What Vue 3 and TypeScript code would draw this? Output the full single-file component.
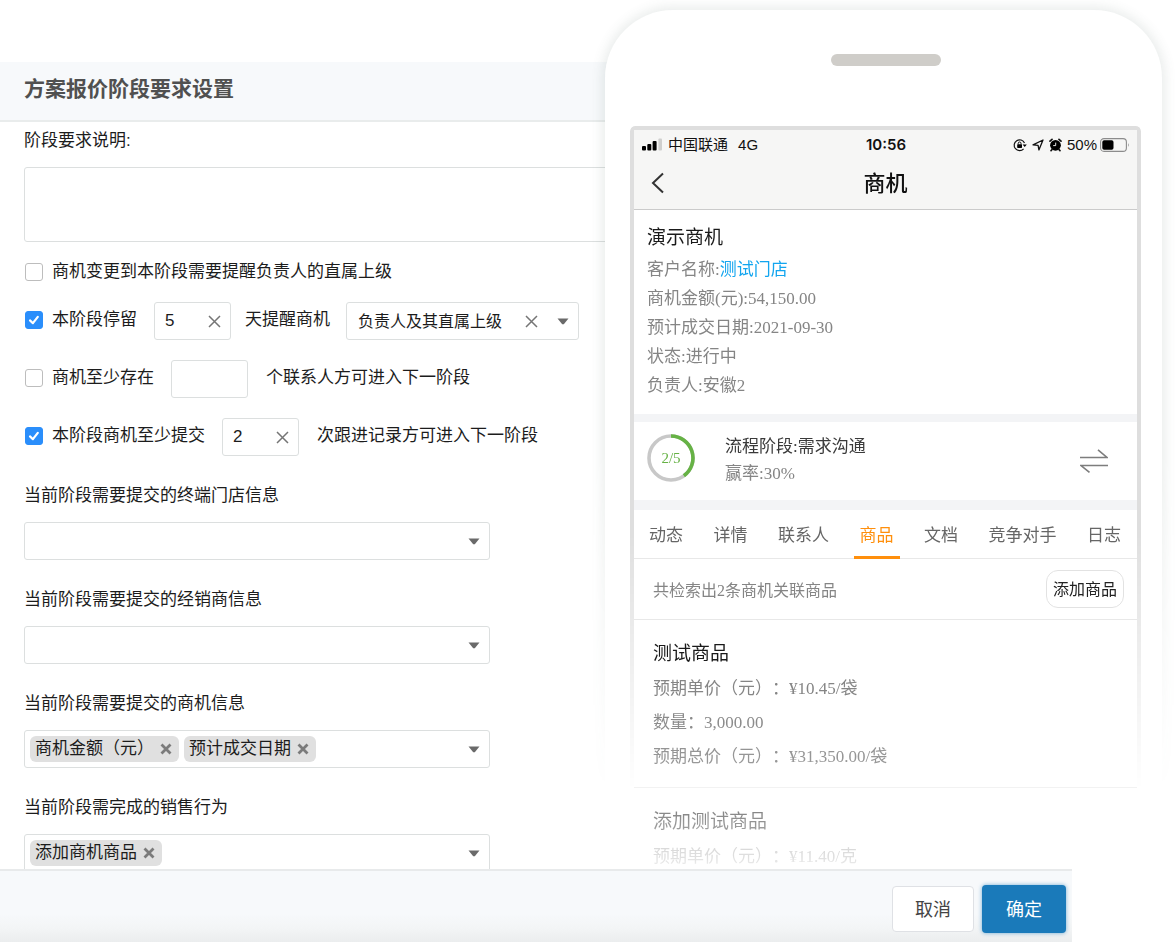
<script setup lang="ts">
import { ref } from 'vue'

interface TagField {
  id: string
  label: string
  tags: string[]
}

const description = ref('')
const notifyManager = ref(false)
const limitStay = ref(true)
const stayDays = ref('5')
const notifyTarget = ref('负责人及其直属上级')
const needContacts = ref(false)
const contactCount = ref('')
const needFollowUps = ref(true)
const followUpCount = ref('2')

const fields = ref<TagField[]>([
  { id: 'store', label: '当前阶段需要提交的终端门店信息', tags: [] },
  { id: 'dealer', label: '当前阶段需要提交的经销商信息', tags: [] },
  { id: 'chance', label: '当前阶段需要提交的商机信息', tags: ['商机金额（元）', '预计成交日期'] },
  { id: 'action', label: '当前阶段需完成的销售行为', tags: ['添加商机商品'] },
])

function removeTag(field: TagField, tag: string) {
  field.tags = field.tags.filter((t) => t !== tag)
}

const tabs = ['动态', '详情', '联系人', '商品', '文档', '竞争对手', '日志']
const activeTab = ref('商品')

const products = [
  { name: '测试商品', rows: ['预期单价（元）：¥10.45/袋', '数量：3,000.00', '预期总价（元）：¥31,350.00/袋'] },
  { name: '添加测试商品', rows: ['预期单价（元）：¥11.40/克'] },
]
</script>

<template>
  <div class="page">
    <section class="dialog" aria-labelledby="dialog-title">
      <header class="dialog-head">
        <h1 id="dialog-title">方案报价阶段要求设置</h1>
      </header>

      <form class="dialog-body" @submit.prevent>
        <label class="field-label" for="desc">阶段要求说明:</label>
        <textarea id="desc" v-model="description" class="desc"></textarea>

        <div class="single-row">
          <label class="check"><input v-model="notifyManager" type="checkbox" />商机变更到本阶段需要提醒负责人的直属上级</label>
        </div>

        <div class="rows">
          <div class="row">
            <label class="check"><input v-model="limitStay" type="checkbox" />本阶段停留</label>
            <span class="num near">
              <input v-model="stayDays" type="text" aria-label="停留天数" />
              <button type="button" class="clear" aria-label="清空" @click="stayDays = ''">
                <svg width="13" height="13" viewBox="0 0 13 13"><path d="M1 1 12 12M12 1 1 12" /></svg>
              </button>
            </span>
            <span class="row-text">天提醒商机</span>
            <span class="picker">
              <select v-model="notifyTarget" aria-label="提醒对象">
                <option value=""></option>
                <option>负责人及其直属上级</option>
              </select>
              <button type="button" class="clear" aria-label="清空" @click="notifyTarget = ''">
                <svg width="13" height="13" viewBox="0 0 13 13"><path d="M1 1 12 12M12 1 1 12" /></svg>
              </button>
              <svg class="caret" width="12" height="7" viewBox="0 0 12 7"><path d="M0.5 0.5H11.5L6.8 6.2H5.2Z" /></svg>
            </span>
          </div>

          <div class="row">
            <label class="check"><input v-model="needContacts" type="checkbox" />商机至少存在</label>
            <span class="num">
              <input v-model="contactCount" type="text" aria-label="联系人个数" />
            </span>
            <span class="row-text">个联系人方可进入下一阶段</span>
          </div>

          <div class="row">
            <label class="check"><input v-model="needFollowUps" type="checkbox" />本阶段商机至少提交</label>
            <span class="num">
              <input v-model="followUpCount" type="text" aria-label="跟进次数" />
              <button type="button" class="clear" aria-label="清空" @click="followUpCount = ''">
                <svg width="13" height="13" viewBox="0 0 13 13"><path d="M1 1 12 12M12 1 1 12" /></svg>
              </button>
            </span>
            <span class="row-text">次跟进记录方可进入下一阶段</span>
          </div>
        </div>

        <div v-for="field in fields" :key="field.id" class="field">
          <label class="field-label" :for="field.id">{{ field.label }}</label>
          <div class="tag-box">
            <span v-for="tag in field.tags" :key="tag" class="tag">
              {{ tag }}
              <button type="button" :aria-label="'移除' + tag" @click="removeTag(field, tag)">
                <svg width="12" height="12" viewBox="0 0 12 12"><path d="M1.5 1.5 10.5 10.5M10.5 1.5 1.5 10.5" /></svg>
              </button>
            </span>
            <select :id="field.id"><option></option></select>
            <svg class="caret" width="12" height="7" viewBox="0 0 12 7"><path d="M0.5 0.5H11.5L6.8 6.2H5.2Z" /></svg>
          </div>
        </div>
      </form>

      <footer class="dialog-foot">
        <button type="button" class="btn">取消</button>
        <button type="button" class="btn primary">确定</button>
      </footer>
    </section>

    <aside class="phone">
      <div class="glow"><div class="shell"></div></div>
      <div class="speaker"></div>

      <div class="screen">
        <div class="screen-frame"></div>
        <div class="screen-content">
          <div class="topbar">
            <div class="status">
              <div class="status-left">
                <svg width="21" height="13" viewBox="0 0 21 13">
                  <rect x="0" y="8" width="4" height="4.5" rx="1" />
                  <rect x="5.3" y="6" width="4" height="6.5" rx="1" />
                  <rect x="10.6" y="3" width="4" height="9.5" rx="1" />
                  <rect x="16.4" y="0.5" width="3.6" height="12" rx="1" fill="#cfcfce" />
                </svg>
                <span>中国联通</span>
                <span class="net">4G</span>
              </div>
              <span class="clock">10:56</span>
              <div class="status-right">
                <svg width="14" height="14" viewBox="0 0 14 14">
                  <path d="M11.5 5A5.4 5.4 0 1 0 10.6 10.8" fill="none" stroke="#111" stroke-width="1.2" />
                  <path d="M9.6 6.4H13.8L11.7 9Z" />
                  <rect x="4.2" y="6.3" width="4.8" height="3.6" rx="0.6" />
                  <path d="M5.2 6.5V5.4A1.4 1.4 0 0 1 8 5.4V6.5" fill="none" stroke="#111" stroke-width="1" />
                </svg>
                <svg width="12" height="12" viewBox="0 0 12 12">
                  <path d="M1 5.9 11 1 6.9 11 6.1 6.3Z" fill="none" stroke="#111" stroke-width="1.3" stroke-linejoin="round" />
                </svg>
                <svg width="13" height="14" viewBox="0 0 13 14">
                  <circle cx="6.5" cy="7.3" r="5.4" />
                  <path d="M1 3.2 3 1.4M12 3.2 10 1.4M3 11.4 2 12.7M10 11.4 11 12.7" stroke="#111" stroke-width="1.7" stroke-linecap="round" />
                  <path d="M6.7 4.6V7.6H4.2" fill="none" stroke="#fff" stroke-width="0.9" />
                </svg>
                <span>50%</span>
                <svg class="battery" width="30" height="14" viewBox="0 0 30 14">
                  <rect x="0.6" y="0.6" width="25.8" height="12.8" rx="3.4" fill="none" stroke="#8c8c8c" stroke-width="1.1" />
                  <rect x="2.3" y="2.3" width="11.2" height="9.4" rx="1.8" />
                  <path d="M28 5Q29.6 7 28 9Z" fill="#8c8c8c" />
                </svg>
              </div>
            </div>
            <div class="nav">
              <button type="button" class="back" aria-label="返回">
                <svg width="14" height="22" viewBox="0 0 14 22"><path d="M12 1.5 2 11 12 20.5" /></svg>
              </button>
              <h2>商机</h2>
            </div>
          </div>

          <div class="summary">
            <h3>演示商机</h3>
            <p>客户名称:<a href="#">测试门店</a></p>
            <p>商机金额(元):54,150.00</p>
            <p>预计成交日期:2021-09-30</p>
            <p>状态:进行中</p>
            <p>负责人:安徽2</p>
          </div>

          <div class="stage">
            <div class="ring">
              <svg width="48" height="48" viewBox="0 0 48 48">
                <circle cx="24" cy="24" r="22" fill="none" stroke="#c8c8c8" stroke-width="3.6" />
                <path d="M24 2A22 22 0 0 1 36.9 41.8" fill="none" stroke="#66b245" stroke-width="3.6" />
              </svg>
              <span>2/5</span>
            </div>
            <div class="stage-text">
              <p class="stage-name">流程阶段:需求沟通</p>
              <p>赢率:30%</p>
            </div>
            <button type="button" class="swap" aria-label="变更阶段">
              <svg width="28" height="24" viewBox="0 0 28 24"><path d="M0 8.5H27L18 0.8M28 16.5H1L9.5 23.4" /></svg>
            </button>
          </div>

          <nav class="tabs">
            <button
              v-for="tab in tabs"
              :key="tab"
              type="button"
              :class="{ active: tab === activeTab }"
              @click="activeTab = tab"
            >{{ tab }}</button>
          </nav>

          <div class="toolbar">
            <span>共检索出2条商机关联商品</span>
            <button type="button">添加商品</button>
          </div>

          <article v-for="product in products" :key="product.name" class="product">
            <h3>{{ product.name }}</h3>
            <p v-for="row in product.rows" :key="row">{{ row }}</p>
          </article>
        </div>
      </div>
    </aside>
  </div>
</template>

<style>
body {
  margin: 0;
  background: #fff;
}
</style>

<style scoped>
.page,
.page * {
  box-sizing: border-box;
}

.page {
  position: relative;
  display: flex;
  flex-direction: column;
  height: 100vh;
  padding-top: 62px;
  overflow: hidden;
  color: #1c1c1c;
  font-family: 'Liberation Sans', 'Noto Sans CJK SC', sans-serif;
  font-size: 17px;
  text-spacing-trim: space-all;
}

button,
input,
select,
textarea {
  margin: 0;
  font: inherit;
  color: inherit;
}

button {
  padding: 0;
  border: 0;
  background: none;
  cursor: pointer;
}

svg {
  display: block;
}

h1,
h2,
h3,
p {
  margin: 0;
}

/* Settings dialog */
.dialog {
  display: flex;
  flex: 1;
  flex-direction: column;
  min-height: 0;
}

.dialog-head {
  height: 60px;
  flex: none;
  margin-right: 104px;
  padding: 0 24px;
  border-bottom: 2px solid #e9ecec;
  background: #f7f9fb;
}

h1 {
  color: #505050;
  font-size: 21px;
  font-weight: 700;
  line-height: 54px;
}

.dialog-body {
  flex: 1;
  min-height: 0;
  padding: 7px 104px 0 24px;
  overflow: hidden;
}

.field-label {
  display: block;
  line-height: 24px;
}

.desc {
  display: block;
  width: 100%;
  height: 75px;
  margin-top: 14px;
  border: 1px solid #dcdfdf;
  border-radius: 3px;
  background: #fff;
  resize: none;
}

.single-row {
  margin-top: 12px;
}

.check {
  display: flex;
  gap: 9px;
  align-items: center;
  line-height: 36px;
  white-space: nowrap;
}

.check input {
  width: 18px;
  height: 18px;
  margin-left: 1px;
  border: 1px solid #bdbdbd;
  border-radius: 3px;
  background: #fff;
  appearance: none;
}

.check input:checked {
  border-color: #2a8efb;
  background: #2a8efb url("data:image/svg+xml,%3Csvg xmlns='http://www.w3.org/2000/svg' viewBox='0 0 16 16'%3E%3Cpath d='M4 8.4 6.9 11.2 11.8 4.8' fill='none' stroke='white' stroke-width='2.2' stroke-linecap='round' stroke-linejoin='round'/%3E%3C/svg%3E") center / contain no-repeat;
}

.rows {
  display: flex;
  flex-direction: column;
  gap: 20px;
  margin: 12px 0 28px;
}

.row {
  display: flex;
  align-items: flex-start;
  height: 38px;
}

.row-text {
  line-height: 36px;
  white-space: nowrap;
}

.num,
.picker {
  display: flex;
  align-items: center;
  height: 38px;
  border: 1px solid #dcdfdf;
  border-radius: 3px;
  background: #fff;
}

.num {
  width: 77px;
  margin: 0 18px 0 17px;
  padding: 0 9px 0 10px;
}

.num.near {
  margin-right: 14px;
}

.num input {
  flex: 1;
  width: 0;
  min-width: 0;
  padding: 0;
  border: 0;
  outline: 0;
  background: none;
}

.clear path {
  fill: none;
  stroke: #757575;
  stroke-width: 1.5;
}

.picker {
  width: 233px;
  margin-left: 16px;
  padding: 0 9px 0 11px;
  font-size: 16px;
}

.picker select {
  flex: 1;
  min-width: 0;
  padding: 0;
  border: 0;
  outline: 0;
  background: none;
  appearance: none;
}

.picker .caret {
  margin-left: 19px;
}

.caret {
  flex: none;
  fill: #6a6a6a;
}

.field + .field {
  margin-top: 28px;
}

.tag-box {
  display: flex;
  gap: 5px;
  align-items: center;
  width: 466px;
  max-width: 100%;
  height: 38px;
  margin-top: 14px;
  padding: 0 9px 0 5px;
  border: 1px solid #dcdfdf;
  border-radius: 3px;
  background: #fff;
}

.tag-box select {
  flex: 1;
  min-width: 0;
  height: 34px;
  border: 0;
  outline: 0;
  background: none;
  appearance: none;
}

.tag {
  display: flex;
  gap: 6px;
  align-items: center;
  height: 26px;
  padding: 0 7px 0 5px;
  border-radius: 6px;
  background: #e0e0e0;
  line-height: 24px;
  white-space: nowrap;
}

.tag path {
  stroke: #7b7b7b;
  stroke-width: 2.8;
}

.dialog-foot {
  position: relative;
  z-index: 2;
  display: flex;
  flex: none;
  gap: 8px;
  align-items: center;
  justify-content: flex-end;
  height: 73px;
  margin-right: 104px;
  padding: 5px 6px 0 24px;
  border-top: 2px solid #e8eaeb;
  background: linear-gradient(#f7f9fb 60%, #f3f5f6 80%, #ebedee);
}

.btn {
  width: 82px;
  height: 46px;
  padding-bottom: 2px;
  border: 1px solid #dfe1e5;
  border-radius: 4px;
  background: #fff;
  color: #444;
  font-size: 18px;
}

.btn.primary {
  width: 84px;
  height: 48px;
  border: 0;
  background: #1a7aba;
  box-shadow: 0 0 4px rgba(26, 122, 186, 0.6);
  color: #fff;
}

/* Phone preview laid over the dialog */
.phone {
  position: absolute;
  z-index: 1;
  top: 10px;
  right: 14px;
  bottom: 0;
  left: 51.45%;
  padding: 44px 21px 0 25px;
  border-radius: 68px 68px 0 0;
  background: #fff;
}

.glow {
  position: absolute;
  z-index: -1;
  inset: -20px -20px 0;
  padding: 20px 20px 0;
  mask-image: linear-gradient(#000 460px, transparent 800px);
}

.shell {
  height: 100%;
  border-radius: 68px 68px 0 0;
  background: #fff;
  box-shadow: 0 0 12px 3px rgba(70, 95, 90, 0.12);
}

.speaker {
  width: 110px;
  height: 12px;
  margin: 0 auto 60px;
  border-radius: 6px;
  background: #cfcdc9;
}

.screen {
  position: relative;
  padding: 4px 4px 0;
}

.screen-frame {
  position: absolute;
  inset: 0;
  border: 4px solid #dedede;
  border-bottom: 0;
  border-radius: 5px 5px 0 0;
  mask-image: linear-gradient(#000 400px, transparent 664px);
}

.screen-content {
  position: relative;
  color: #858585;
  font-family: 'Liberation Serif', 'Noto Sans CJK SC', serif;
  mask-image: linear-gradient(#000 570px, rgba(0, 0, 0, 0.85) 630px, rgba(0, 0, 0, 0.48) 690px, rgba(0, 0, 0, 0.25) 728px, transparent 748px);
}

.topbar {
  height: 80px;
  border-bottom: 1px solid #cbcbcb;
  background: #f6f6f5;
  color: #111;
  font-family: 'Liberation Sans', 'Noto Sans CJK SC', sans-serif;
}

.status {
  display: grid;
  grid-template-columns: 1fr auto 1fr;
  align-items: center;
  height: 29px;
  padding: 0 7px 0 8px;
  font-size: 15px;
  line-height: 22px;
}

.status-left,
.status-right {
  display: flex;
  align-items: center;
}

.status-left {
  gap: 5px;
}

.net {
  margin-left: 5px;
}

.clock {
  font-family: Inter, sans-serif;
  font-weight: 600;
}

.status-right {
  gap: 5px;
  justify-content: flex-end;
}

.battery {
  margin-left: -2px;
}

.nav {
  display: grid;
  grid-template-columns: 1fr auto 1fr;
  align-items: center;
  height: 48px;
  padding: 0 17px;
}

.back {
  justify-self: start;
}

.back path {
  fill: none;
  stroke: #333;
  stroke-width: 2;
}

h2 {
  padding-bottom: 4px;
  font-size: 22px;
  font-weight: 500;
}

.summary {
  padding: 10px 13px 14px;
  border-bottom: 8px solid #f3f4f6;
  line-height: 29px;
}

h3 {
  color: #1a1a1a;
  font-size: 19px;
  font-weight: 400;
  line-height: 35px;
}

.summary a {
  color: #12a5ef;
  text-decoration: none;
}

.stage {
  display: flex;
  align-items: center;
  height: 88px;
  padding: 0 29px 6px 13px;
  border-bottom: 10px solid #f3f4f6;
  line-height: 27px;
}

.ring {
  display: grid;
  place-items: center;
  color: #66b245;
  font-size: 15px;
}

.ring > * {
  grid-area: 1 / 1;
}

.stage-text {
  flex: 1;
  margin-left: 30px;
  padding-top: 4px;
}

.stage-name {
  color: #3a3a3a;
}

.swap {
  padding-top: 6px;
}

.swap path {
  fill: none;
  stroke: #7d7d7d;
  stroke-width: 1.6;
}

.tabs {
  display: flex;
  justify-content: space-between;
  height: 49px;
  padding: 0 10px 0 9px;
  border-bottom: 1px solid #e8e8e8;
  color: #666;
}

.tabs button {
  height: 49px;
  padding: 0 6px;
  border-bottom: 3px solid transparent;
  white-space: nowrap;
}

.tabs .active {
  border-color: #ff8f0c;
  color: #ff8f0c;
}

.toolbar {
  display: flex;
  align-items: center;
  justify-content: space-between;
  height: 61px;
  padding: 0 13px 0 19px;
  border-bottom: 1px solid #e8e8e8;
  font-size: 16px;
}

.toolbar button {
  width: 78px;
  height: 38px;
  padding-bottom: 2px;
  border: 1px solid #e2e2e2;
  border-radius: 12px;
  color: #222;
  white-space: nowrap;
}

.product {
  padding: 15px 19px 13px;
  border-bottom: 1px solid #ececec;
  line-height: 34px;
}

.product:last-child {
  border-bottom: 0;
}

.product h3 {
  line-height: 37px;
}
</style>
